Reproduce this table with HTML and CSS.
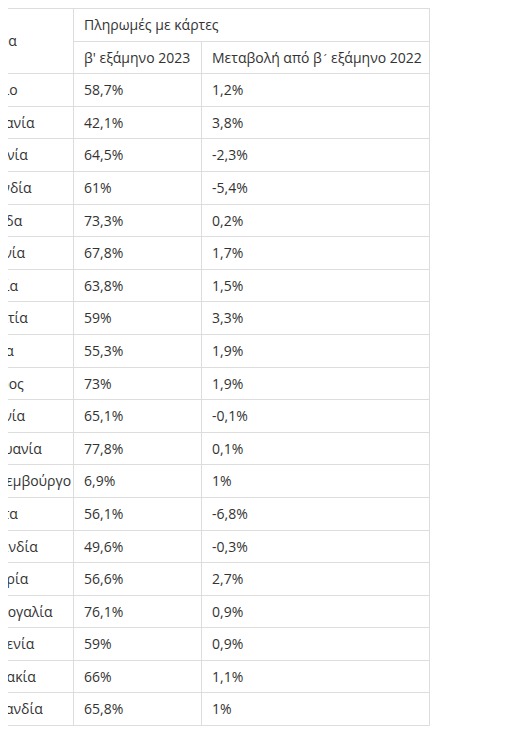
FILE: index.html
```html
<!DOCTYPE html>
<html lang="el">
<head>
<meta charset="utf-8">
<link rel="stylesheet" href="styles.css">
</head>
<body>
<div class="wrap">
<table class="data">
  <colgroup>
    <col class="c1"><col class="c2"><col class="c3">
  </colgroup>
  <thead>
    <tr><th rowspan="2" class="first">Χώρα</th><th colspan="2">Πληρωμές με κάρτες</th></tr>
    <tr><th>β' εξάμηνο 2023</th><th>Μεταβολή από β<span class="tonos">΄</span> εξάμηνο 2022</th></tr>
  </thead>
  <tbody>
    <tr><td>Βέλγιο</td><td>58,7%</td><td>1,2%</td></tr>
    <tr><td>Γερμανία</td><td>42,1%</td><td>3,8%</td></tr>
    <tr><td>Εσθονία</td><td>64,5%</td><td>-2,3%</td></tr>
    <tr><td>Ιρλανδία</td><td>61%</td><td>-5,4%</td></tr>
    <tr><td>Ελλάδα</td><td>73,3%</td><td>0,2%</td></tr>
    <tr><td>Ισπανία</td><td>67,8%</td><td>1,7%</td></tr>
    <tr><td>Γαλλία</td><td>63,8%</td><td>1,5%</td></tr>
    <tr><td>Κροατία</td><td>59%</td><td>3,3%</td></tr>
    <tr><td>Ιταλία</td><td>55,3%</td><td>1,9%</td></tr>
    <tr><td>Κύπρος</td><td>73%</td><td>1,9%</td></tr>
    <tr><td>Λετονία</td><td>65,1%</td><td>-0,1%</td></tr>
    <tr><td>Λιθουανία</td><td>77,8%</td><td>0,1%</td></tr>
    <tr><td>Λουξεμβούργο</td><td>6,9%</td><td>1%</td></tr>
    <tr><td>Μάλτα</td><td>56,1%</td><td>-6,8%</td></tr>
    <tr><td>Ολλανδία</td><td>49,6%</td><td>-0,3%</td></tr>
    <tr><td>Αυστρία</td><td>56,6%</td><td>2,7%</td></tr>
    <tr><td>Πορτογαλία</td><td>76,1%</td><td>0,9%</td></tr>
    <tr><td>Σλοβενία</td><td>59%</td><td>0,9%</td></tr>
    <tr><td>Σλοβακία</td><td>66%</td><td>1,1%</td></tr>
    <tr><td>Φινλανδία</td><td>65,8%</td><td>1%</td></tr>
  </tbody>
</table>
</div>
</body>
</html>
```

FILE: styles.css
```css
html, body {
  background: #ffffff;
}
body {
  margin: 8px;
  overflow: hidden;
  font-family: "Open Sans", "Noto Sans", "DejaVu Sans", sans-serif;
  color: #333333;
}
.wrap {
  margin-left: -49px;
}
.data {
  border-collapse: collapse;
  table-layout: fixed;
  width: 470px;
  font-size: 14px;
}
.c1 { width: 114px; }
.c2 { width: 128px; }
.c3 { width: 228px; }
.data th,
.data td {
  border: 1px solid #dddddd;
  padding: 7px 10px;
  line-height: 17.6px;
  text-align: left;
  font-weight: 400;
  white-space: nowrap;
  vertical-align: middle;
}
.data td:first-child {
  padding-left: 14px;
}
.data th.first {
  padding-left: 21px;
}
.tonos {
  font-family: "DejaVu Sans", sans-serif;
  font-size: 11px;
  line-height: 1;
}
```
